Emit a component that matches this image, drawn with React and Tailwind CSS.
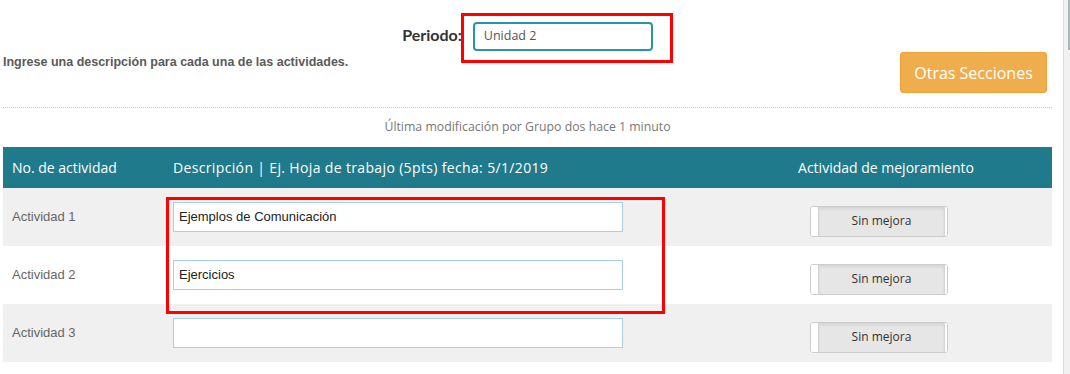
import React from "react";

const nun = { fontFamily: '"Open Sans", "Noto Sans", sans-serif' };
const lato = { fontFamily: 'Lato, "Open Sans", sans-serif' };
const ari = { fontFamily: '"Liberation Sans", Arial, sans-serif' };

function Toggle() {
  return (
    <div className="flex h-[31px] w-[138px] rounded-[3px] border border-[#cccccc] bg-white overflow-hidden">
      <div className="w-[8px] bg-white border-r border-[#d4d4d4]" />
      <div
        className="flex-1 flex items-center justify-center bg-[#e6e6e6] text-[12px] text-[#333] shadow-[inset_0_2px_3px_rgba(0,0,0,0.08)]"
        style={nun}
      >
        Sin mejora
      </div>
      <div className="w-[3px] bg-white border-l border-[#d4d4d4]" />
    </div>
  );
}

function Row({ label, value, gray }) {
  return (
    <div className={`grid grid-cols-[162px_555px_1fr] h-[58px] items-center ${gray ? "bg-[#f0f0f0]" : "bg-white"}`}>
      <div className="pl-[9px] text-[13px] text-[#666]" style={ari}>{label}</div>
      <div className="pl-[8px]">
        <div className="h-[30px] w-[450px] border border-[#a9cfe4] bg-white flex items-center pl-[5px] text-[13px] text-[#222]" style={ari}>
          {value}
        </div>
      </div>
      <div className="pl-[90px] pt-[8px]">
        <Toggle />
      </div>
    </div>
  );
}

export default function App() {
  return (
    <div className="relative w-[1070px] h-[374px] overflow-hidden bg-white flex">
      <div className="w-[1063px] pl-[3px] pr-[11px]">
        {/* Top */}
        <div className="h-[108px] border-b border-dotted border-[#b9cfdd]">
          <div className="flex justify-center items-center gap-[11px] pt-[22px]">
            <span className="text-[16px] font-bold text-[#333] -mt-[4px]" style={lato}>Periodo:</span>
            <div className="h-[29px] w-[180px] rounded-[4px] border-2 border-[#2a93a8] flex items-center pl-[9px] text-[12.5px] text-[#555]" style={nun}>
              Unidad 2
            </div>
          </div>
          <div className="flex justify-between items-start">
            <span className="mt-[2px] text-[12.5px] font-bold text-[#5a5a5a]" style={ari}>
              Ingrese una descripción para cada una de las actividades.
            </span>
            <div className="mt-[1px] mr-[5px] h-[41px] w-[147px] rounded-[3px] border border-[#eea236] bg-[#f0ad4e] flex items-center justify-center text-[16px] text-white" style={nun}>
              Otras Secciones
            </div>
          </div>
        </div>
        <div className="h-[39px] flex items-center justify-center text-[12.3px] text-[#777]" style={nun}>
          Última modificación por Grupo dos hace 1 minuto
        </div>
        <div className="grid grid-cols-[162px_555px_1fr] h-[41px] items-center bg-[#1f7a8c] text-white text-[14px]" style={nun}>
          <div className="pl-[9px]">No. de actividad</div>
          <div className="pl-[8px] tracking-[0.35px]">Descripción | Ej. Hoja de trabajo (5pts) fecha: 5/1/2019</div>
          <div className="text-center">Actividad de mejoramiento</div>
        </div>
        <Row label="Actividad 1" value="Ejemplos de Comunicación" gray />
        <Row label="Actividad 2" value="Ejercicios" />
        <Row label="Actividad 3" value="" gray />
      </div>
      {/* scrollbar */}
      <div className="relative w-[7px] h-full bg-[#f1f1f1] border-l border-[#dcdcdc]">
        <div className="absolute right-0 top-0 w-[2px] h-[50px] bg-[#a8b6b6]" />
      </div>
      {/* red annotation boxes */}
      <div className="absolute left-[461px] top-[13px] w-[212px] h-[50px] border-[3px] border-[#ff0000]" />
      <div className="absolute left-[166px] top-[197px] w-[499px] h-[117px] border-[3px] border-[#ff0000]" />
    </div>
  );
}
